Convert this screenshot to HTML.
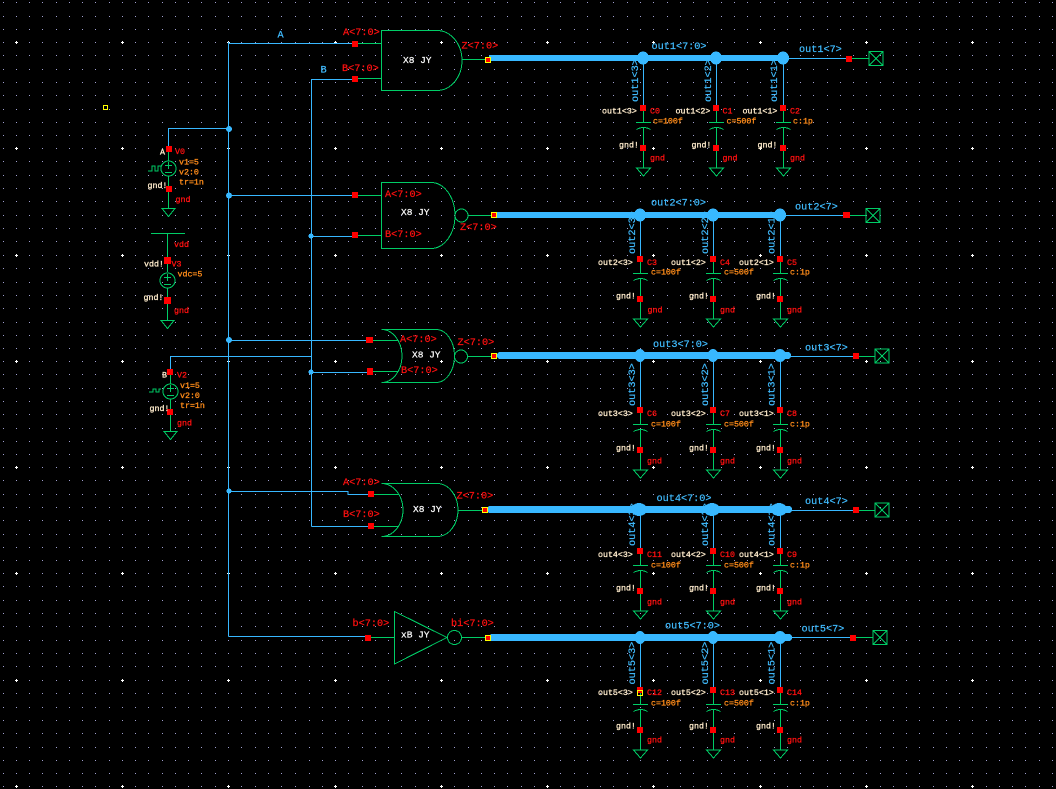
<!DOCTYPE html>
<html><head><meta charset="utf-8"><title>Schematic</title>
<style>
html,body{margin:0;padding:0;background:#000;width:1056px;height:789px;overflow:hidden}
svg{display:block;shape-rendering:crispEdges}
text{font-family:"Liberation Mono",monospace;dominant-baseline:central;white-space:pre;font-size:10.2px;stroke-width:.22px}
.r{fill:#ff1010;stroke:#ff1010}.b{fill:#40bcff;stroke:#40bcff}.w{fill:#fff;stroke:#fff}
.s{font-size:8.3px;stroke-width:.3px}
.cr{fill:#ffeccc;stroke:#ffeccc}.o{fill:#ff8c1a;stroke:#ff8c1a}
.g{fill:none;stroke:#00cc66;stroke-width:1}
.bl{fill:none;stroke:#38b8ff;stroke-width:1}
.j{fill:#38b8ff}
.p{fill:#ff0000}
.ps{fill:#ff0000;stroke:#ffff00;stroke-width:1}
</style></head><body>
<svg width="1056" height="789" viewBox="0 0 1056 789" xmlns="http://www.w3.org/2000/svg">
<defs>
<g id="cap"><path class="g" d="M0 0V14.5M-7.5 14.5H7.5M0 19.5V60M-7 21.5Q0 17.5 7 21.5M-7 60H7L0 68Z"/><rect class="p" x="-3.5" y="-3" width="6" height="6"/><rect class="p" x="-3.5" y="37" width="6" height="6"/></g>
<g id="term"><path class="g" d="M-7 -7H7V7H-7ZM-7 -7L7 7M7 -7L-7 7"/></g>
<g id="gnd"><path class="g" d="M-6.5 0H6.5L0 8Z"/></g>
<path id="crs" fill="none" stroke="#fff" d="M15 42.5h3M16.5 41v3M121 42.5h3M122.5 41v3M227 42.5h3M228.5 41v3M334 42.5h3M335.5 41v3M440 42.5h3M441.5 41v3M546 42.5h3M547.5 41v3M652 42.5h3M653.5 41v3M759 42.5h3M760.5 41v3M865 42.5h3M866.5 41v3M971 42.5h3M972.5 41v3"/>
</defs>
<rect width="1056" height="789" fill="#000"/>
<path fill="none" stroke="#a0a0d0" stroke-width="1" stroke-dasharray="1 12 1 12 1 12 1 13 1 12 1 12 1 12 1 13 1 12 1 12 1 12 1 13 1 12 1 12 1 12 1 13 1 12 1 12 1 13 1 12 1 12 1 13 1 13 1 12 1 12 1 12 1 13 1 12 1 12 1 12 1 13" d="M3 2.5H1056M3 16.5H1056M3 29.5H1056M3 42.5H1056M3 55.5H1056M3 69.5H1056M3 82.5H1056M3 95.5H1056M3 109.5H1056M3 122.5H1056M3 135.5H1056M3 148.5H1056M3 161.5H1056M3 175.5H1056M3 188.5H1056M3 201.5H1056M3 215.5H1056M3 228.5H1056M3 241.5H1056M3 255.5H1056M3 268.5H1056M3 282.5H1056M3 295.5H1056M3 308.5H1056M3 322.5H1056M3 335.5H1056M3 348.5H1056M3 361.5H1056M3 374.5H1056M3 388.5H1056M3 401.5H1056M3 414.5H1056M3 428.5H1056M3 441.5H1056M3 454.5H1056M3 467.5H1056M3 480.5H1056M3 494.5H1056M3 507.5H1056M3 520.5H1056M3 534.5H1056M3 547.5H1056M3 560.5H1056M3 573.5H1056M3 586.5H1056M3 600.5H1056M3 613.5H1056M3 626.5H1056M3 640.5H1056M3 653.5H1056M3 666.5H1056M3 680.5H1056M3 693.5H1056M3 707.5H1056M3 720.5H1056M3 733.5H1056M3 747.5H1056M3 760.5H1056M3 773.5H1056M3 786.5H1056"/>
<use href="#crs"/><use href="#crs" y="106"/><use href="#crs" y="213"/><use href="#crs" y="319"/><use href="#crs" y="425"/><use href="#crs" y="531"/><use href="#crs" y="638"/><use href="#crs" y="744"/>
<rect x="103.5" y="105.5" width="4" height="4" fill="none" stroke="#ffff00"/>

<!-- thin wires -->
<path class="bl" d="M228.5 42V636.5M228.5 43.5H355M311.5 79V526.5M311.5 79.5H355M168.5 148V128.5H228.5M228.5 195.5H355M311.5 236.5H355M228.5 340.5H369M311.5 372.5H370M170.5 371V356.5H311.5M228.5 491.5H348L348 494.5H371M311.5 526.5H371M228.5 636.5H368"/>
<g class="j"><circle cx="229" cy="129" r="3"/><circle cx="229" cy="195.500" r="3"/><circle cx="311" cy="236" r="2.500"/><circle cx="229" cy="340" r="3"/><circle cx="311" cy="372" r="2.500"/><circle cx="229" cy="491" r="2.500"/></g>
<text class="b" x="277.500" y="36">A</text>
<text class="b" x="320.500" y="71">B</text>

<!-- gate 1 -->
<path class="g" d="M381.500 30.500H437A25 30 0 0 1 437 90.500H381.500ZM355 43.500H381M355 78.500H381M462 59.500H487"/>
<rect class="p" x="352" y="41" width="6" height="6"/><rect class="p" x="352" y="76" width="6" height="6"/>
<text class="r" x="343" y="33.500">A&lt;7:0&gt;</text>
<text class="r" x="342" y="69.500">B&lt;7:0&gt;</text>
<text class="w" x="403" y="60.500" style="font-size:9.500px">X8 JY</text>
<text class="r" x="461.500" y="47">Z&lt;7:0&gt;</text>

<!-- gate 2 -->
<path class="g" d="M381.500 182.500H431A24 33 0 0 1 431 248.500H381.500ZM355 195.500H381M355 235.500H381M468 215.500H492"/>
<circle class="g" cx="461.500" cy="215.500" r="6.500"/>
<rect class="p" x="352" y="192" width="6" height="6"/><rect class="p" x="352" y="232" width="6" height="6"/>
<text class="r" x="385" y="195.500">A&lt;7:0&gt;</text>
<text class="r" x="385" y="235.500">B&lt;7:0&gt;</text>
<text class="w" x="401" y="212.500" style="font-size:9.500px">X8 JY</text>
<text class="r" x="460" y="228.500">Z&lt;7:0&gt;</text>

<!-- gate 3 -->
<path class="g" d="M381.500 329.500H436A18.500 26.500 0 0 1 436 382.500H381.500A20.500 26.500 0 0 0 381.500 329.500ZM370 340.500H398M370 371.500H398M467 356.500H492"/>
<circle class="g" cx="461" cy="356.500" r="6.500"/>
<rect class="p" x="366" y="337" width="7" height="6"/><rect class="p" x="367" y="368" width="6" height="7"/>
<text class="r" x="400" y="340.500">A&lt;7:0&gt;</text>
<text class="r" x="401" y="371.500">B&lt;7:0&gt;</text>
<text class="w" x="412" y="355" style="font-size:9.500px">X8 JY</text>
<text class="r" x="457.500" y="343.500">Z&lt;7:0&gt;</text>

<!-- gate 4 -->
<path class="g" d="M381.500 483.500H437A21 26.500 0 0 1 437 536.500H381.500A21.500 26.500 0 0 0 381.500 483.500ZM371 494.500H399M371 526.500H399M458 510.500H483"/>
<rect class="p" x="368" y="491" width="6" height="6"/><rect class="p" x="368" y="523" width="6" height="6"/>
<text class="r" x="343" y="483.500">A&lt;7:0&gt;</text>
<text class="r" x="343" y="515.500">B&lt;7:0&gt;</text>
<text class="w" x="413" y="509.500" style="font-size:9.500px">X8 JY</text>
<text class="r" x="456.500" y="497">Z&lt;7:0&gt;</text>

<!-- inverter -->
<path class="g" d="M394.500 611.500V664L447 637.500ZM368 637.500H394M461 637.500H486"/>
<circle class="g" cx="454.500" cy="637.500" r="7"/>
<rect class="p" x="365" y="635" width="6" height="6"/>
<text class="r" x="352.500" y="624.500">b&lt;7:0&gt;</text>
<text class="r" x="451" y="624.500">bi&lt;7:0&gt;</text>
<text class="w" x="401" y="635" style="font-size:9.500px">xB JY</text>

<!-- sources -->
<path class="g" d="M168.500 148V161M168.500 176V208M148 171h4v-5h3v5h3v-5h3v5"/>
<circle class="g" cx="168.500" cy="168.500" r="7.500"/>
<path class="g" d="M165 165.500h7M168.500 162v7M165 172.500h7"/>
<use href="#gnd" x="168.500" y="208.500"/>
<rect class="p" x="166" y="146" width="6" height="6"/><rect class="p" x="166" y="186" width="6" height="6"/>
<text class="s cr" x="160" y="153">A</text><text class="s r" x="175" y="152.500">V0</text>
<text class="s o" x="179" y="163">v1=5</text><text class="s o" x="179" y="173">v2:0</text><text class="s o" x="179" y="183">tr=1n</text>
<text class="s cr" x="147.500" y="186.500">gnd!</text><text class="s r" x="175.500" y="200.500">gnd</text>

<path class="g" d="M151 233.500H185M167.500 233V272M167.500 288V320"/>
<circle class="g" cx="167.500" cy="280.500" r="7.500"/>
<path class="g" d="M164 277.500h7M167.500 274v7M164 284.500h7"/>
<use href="#gnd" x="167.500" y="320.500"/>
<rect class="p" x="164" y="257" width="7" height="7"/><rect class="p" x="164" y="297" width="7" height="7"/>
<text class="s r" x="174" y="245.500">vdd</text><text class="s r" x="171.500" y="265">V3</text>
<text class="s cr" x="144" y="265">vdd!</text><text class="s o" x="177.500" y="275">vdc=5</text>
<text class="s cr" x="143.500" y="298.500">gnd!</text><text class="s r" x="174" y="311.500">gnd</text>

<path class="g" d="M170.500 371V384M170.500 399V431M149 392h4v-3h3v3h3v-3h2"/>
<circle class="g" cx="170.500" cy="391.500" r="7.500"/>
<path class="g" d="M167 388.500h7M170.500 385v7M167 395.500h7"/>
<use href="#gnd" x="170.500" y="431.500"/>
<rect class="p" x="167" y="369" width="6" height="6"/><rect class="p" x="167" y="409" width="6" height="6"/>
<text class="s cr" x="162" y="376">B</text><text class="s r" x="177" y="376">V2</text>
<text class="s o" x="180" y="386.500">v1=5</text><text class="s o" x="180" y="396.500">v2:0</text><text class="s o" x="180" y="406.500">tr=1n</text>
<text class="s cr" x="149.500" y="409.500">gnd!</text><text class="s r" x="177" y="424">gnd</text>

<!-- ROW 1 -->
<text class="b" transform="translate(636.500,102) rotate(-90)">out1&lt;3&gt;</text>
<text class="b" transform="translate(709.500,102) rotate(-90)">out1&lt;2&gt;</text>
<text class="b" transform="translate(775.500,102) rotate(-90)">out1&lt;1&gt;</text>
<path class="bl" d="M643.500 58V108M716.500 58V108M783.500 58V108M783 58.500H849"/>
<path class="g" d="M849 58.500H869"/>
<rect class="j" x="489" y="55" width="294" height="6"/>
<g class="j"><ellipse cx="643" cy="58" rx="6" ry="6.500"/><ellipse cx="716" cy="58" rx="6" ry="6.500"/><ellipse cx="783" cy="58" rx="6" ry="6.500"/></g>
<rect class="ps" x="485.500" y="57.500" width="5" height="5"/>
<use href="#cap" x="643.500" y="108"/><use href="#cap" x="716.500" y="108"/><use href="#cap" x="783.500" y="108"/>
<rect class="p" x="846" y="56" width="6" height="6"/><use href="#term" x="876" y="58.500"/>
<text class="b" x="651.500" y="47.500">out1&lt;7:0&gt;</text><text class="b" x="799" y="50.500">out1&lt;7&gt;</text>
<text class="cr s" x="602" y="112">out1&lt;3&gt;</text><text class="r s" x="650" y="112">C0</text><text class="o s" x="653" y="122">c=100f</text><text class="cr s" x="619" y="146">gnd!</text><text class="r s" x="650" y="159">gnd</text>
<text class="cr s" x="675.500" y="112">out1&lt;2&gt;</text><text class="r s" x="722.500" y="112">C1</text><text class="o s" x="726.500" y="122">c=500f</text><text class="cr s" x="691.500" y="146">gnd!</text><text class="r s" x="722.500" y="159">gnd</text>
<text class="cr s" x="742.500" y="112">out1&lt;1&gt;</text><text class="r s" x="790" y="112">C2</text><text class="o s" x="793" y="122">c:1p</text><text class="cr s" x="757.500" y="146">gnd!</text><text class="r s" x="790" y="159">gnd</text>

<!-- ROW 2 -->
<text class="b" transform="translate(633.500,254) rotate(-90)">out2&lt;3&gt;</text>
<text class="b" transform="translate(706.500,254) rotate(-90)">out2&lt;2&gt;</text>
<text class="b" transform="translate(773,254) rotate(-90)">out2&lt;1&gt;</text>
<path class="bl" d="M640.500 215V259M713.500 215V259M780.500 215V259M780 215.500H846"/>
<path class="g" d="M846 215.500H866"/>
<rect class="j" x="497" y="212" width="283" height="6"/>
<g class="j"><ellipse cx="640" cy="215" rx="6" ry="6.500"/><ellipse cx="713" cy="215" rx="6" ry="6.500"/><ellipse cx="780" cy="215" rx="6" ry="6.500"/></g>
<rect class="ps" x="491.500" y="212.500" width="5" height="5"/>
<use href="#cap" x="640.500" y="259"/><use href="#cap" x="713.500" y="259"/><use href="#cap" x="780.500" y="259"/>
<rect class="p" x="843" y="212" width="7" height="6"/><use href="#term" x="873" y="215.500"/>
<text class="b" x="651" y="204">out2&lt;7:0&gt;</text><text class="b" x="795" y="208">out2&lt;7&gt;</text>
<text class="cr s" x="598" y="263.500">out2&lt;3&gt;</text><text class="r s" x="647" y="263.500">C3</text><text class="o s" x="651" y="273">c=100f</text><text class="cr s" x="616" y="297">gnd!</text><text class="r s" x="647.500" y="311">gnd</text>
<text class="cr s" x="671" y="263.500">out1&lt;2&gt;</text><text class="r s" x="720" y="263.500">C4</text><text class="o s" x="724" y="273">c=500f</text><text class="cr s" x="689" y="297">gnd!</text><text class="r s" x="720" y="311">gnd</text>
<text class="cr s" x="739" y="263.500">out2&lt;1&gt;</text><text class="r s" x="787" y="263.500">C5</text><text class="o s" x="790" y="273">c:1p</text><text class="cr s" x="756" y="297">gnd!</text><text class="r s" x="787" y="311">gnd</text>

<!-- ROW 3 -->
<text class="b" transform="translate(633.500,406) rotate(-90)">out3&lt;3&gt;</text>
<text class="b" transform="translate(706.500,406) rotate(-90)">out3&lt;2&gt;</text>
<text class="b" transform="translate(773,406) rotate(-90)">out3&lt;1&gt;</text>
<path class="bl" d="M640.500 356V410M713.500 356V410M780.500 356V410M790 356.500H856"/>
<path class="g" d="M856 356.500H875"/>
<rect class="j" x="497" y="352" width="294" height="7" rx="3"/>
<g class="j"><ellipse cx="640" cy="355.500" rx="5.500" ry="6.500"/><ellipse cx="713" cy="355.500" rx="5.500" ry="6.500"/><ellipse cx="780" cy="355.500" rx="6" ry="6.500"/></g>
<rect class="ps" x="491.500" y="353.500" width="5" height="5"/>
<use href="#cap" x="640.500" y="410"/><use href="#cap" x="713.500" y="410"/><use href="#cap" x="780.500" y="410"/>
<rect class="p" x="853" y="353" width="6" height="6"/><use href="#term" x="882" y="356"/>
<text class="b" x="653" y="345.500">out3&lt;7:0&gt;</text><text class="b" x="805" y="349">out3&lt;7&gt;</text>
<text class="cr s" x="598" y="414.500">out3&lt;3&gt;</text><text class="r s" x="647" y="414.500">C6</text><text class="o s" x="651" y="425">c=100f</text><text class="cr s" x="616" y="449">gnd!</text><text class="r s" x="647" y="462">gnd</text>
<text class="cr s" x="671" y="414.500">out3&lt;2&gt;</text><text class="r s" x="720" y="414.500">C7</text><text class="o s" x="724" y="425">c=500f</text><text class="cr s" x="689" y="449">gnd!</text><text class="r s" x="720" y="462">gnd</text>
<text class="cr s" x="739" y="414.500">out3&lt;1&gt;</text><text class="r s" x="787" y="414.500">C8</text><text class="o s" x="790" y="425">c:1p</text><text class="cr s" x="756" y="449">gnd!</text><text class="r s" x="787" y="462">gnd</text>

<!-- ROW 4 -->
<text class="b" transform="translate(633.500,546) rotate(-90)">out4&lt;3&gt;</text>
<text class="b" transform="translate(706.500,546) rotate(-90)">out4&lt;2&gt;</text>
<text class="b" transform="translate(773,546) rotate(-90)">out4&lt;1&gt;</text>
<path class="bl" d="M640.500 510V551M713.500 510V551M780.500 510V551M790 510.500H856"/>
<path class="g" d="M856 510.500H875"/>
<rect class="j" x="487" y="506" width="305" height="7" rx="3"/>
<g class="j"><ellipse cx="639" cy="509.500" rx="8" ry="6.500"/><ellipse cx="712" cy="509.500" rx="8" ry="6.500"/><ellipse cx="779" cy="509.500" rx="8" ry="6.500"/></g>
<rect class="ps" x="482.500" y="507.500" width="5" height="5"/>
<use href="#cap" x="640.500" y="551"/><use href="#cap" x="713.500" y="551"/><use href="#cap" x="780.500" y="551"/>
<rect class="p" x="853" y="507" width="6" height="6"/><use href="#term" x="882" y="510"/>
<text class="b" x="656.500" y="499.500">out4&lt;7:0&gt;</text><text class="b" x="805" y="502.500">out4&lt;7&gt;</text>
<text class="cr s" x="598" y="555.500">out4&lt;3&gt;</text><text class="r s" x="647" y="555.500">C11</text><text class="o s" x="651" y="566">c=100f</text><text class="cr s" x="616" y="589">gnd!</text><text class="r s" x="647" y="603">gnd</text>
<text class="cr s" x="671" y="555.500">out4&lt;2&gt;</text><text class="r s" x="720" y="555.500">C10</text><text class="o s" x="724" y="566">c=500f</text><text class="cr s" x="689" y="589">gnd!</text><text class="r s" x="720" y="603">gnd</text>
<text class="cr s" x="739" y="555.500">out4&lt;1&gt;</text><text class="r s" x="787" y="555.500">C9</text><text class="o s" x="790" y="566">c:1p</text><text class="cr s" x="756" y="589">gnd!</text><text class="r s" x="787" y="603">gnd</text>

<!-- ROW 5 -->
<text class="b" transform="translate(633.500,684.500) rotate(-90)">out5&lt;3&gt;</text>
<text class="b" transform="translate(706.500,684.500) rotate(-90)">out5&lt;2&gt;</text>
<text class="b" transform="translate(773,684.500) rotate(-90)">out5&lt;1&gt;</text>
<path class="bl" d="M640.500 638V689M713.500 638V689M780.500 638V689M790 637.500H853"/>
<path class="g" d="M853 637.500H873"/>
<rect class="j" x="489" y="634" width="303" height="7" rx="3"/>
<g class="j"><ellipse cx="640" cy="637.500" rx="5.500" ry="6.500"/><ellipse cx="713" cy="637.500" rx="5.500" ry="6.500"/><ellipse cx="780" cy="637.500" rx="6" ry="6.500"/></g>
<rect class="ps" x="485.500" y="635.500" width="5" height="5"/>
<use href="#cap" x="640.500" y="690"/><use href="#cap" x="713.500" y="690"/><use href="#cap" x="780.500" y="690"/>
<rect x="637.500" y="690.500" width="5" height="5" fill="none" stroke="#ffff00"/>
<rect class="p" x="850" y="635" width="6" height="6"/><use href="#term" x="880" y="637.500"/>
<text class="b" x="665" y="627">out5&lt;7:0&gt;</text><text class="b" x="801.500" y="630">out5&lt;7&gt;</text>
<text class="cr s" x="598" y="693.500">out5&lt;3&gt;</text><text class="r s" x="647" y="693.500">C12</text><text class="o s" x="651" y="704">c=100f</text><text class="cr s" x="616" y="727">gnd!</text><text class="r s" x="647" y="741">gnd</text>
<text class="cr s" x="671" y="693.500">out5&lt;2&gt;</text><text class="r s" x="720" y="693.500">C13</text><text class="o s" x="724" y="704">c=500f</text><text class="cr s" x="689" y="727">gnd!</text><text class="r s" x="720" y="741">gnd</text>
<text class="cr s" x="739" y="693.500">out5&lt;1&gt;</text><text class="r s" x="787" y="693.500">C14</text><text class="o s" x="790" y="704">c:1p</text><text class="cr s" x="756" y="727">gnd!</text><text class="r s" x="787" y="741">gnd</text>
</svg>
</body></html>
